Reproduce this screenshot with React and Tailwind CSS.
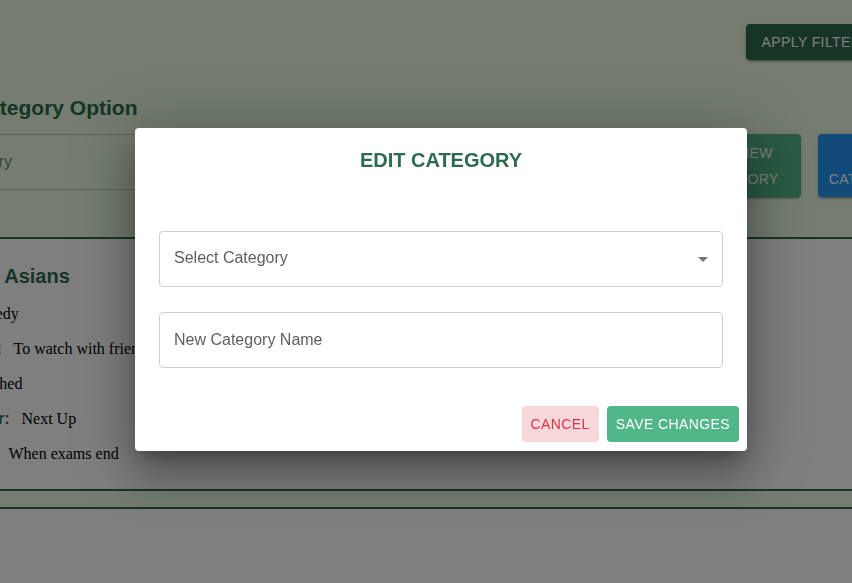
export default function App() {
  const sans = "font-['Liberation_Sans',Arial,sans-serif]";
  return (
    <div className={`relative h-[583px] w-full overflow-hidden bg-white ${sans}`}>
      {/* Top filter section */}
      <section className="h-[239px] border-b-2 border-[#2d6a4f] bg-[#e8fae0] pt-6">
        <div className="flex justify-end">
          <button className="-mr-[35px] h-9 whitespace-nowrap rounded bg-[#2d6a4f] px-4 text-sm uppercase tracking-[0.4px] text-white shadow-[0_3px_1px_-2px_rgba(0,0,0,0.2),0_2px_2px_0_rgba(0,0,0,0.14),0_1px_5px_0_rgba(0,0,0,0.12)]">
            Apply Filters
          </button>
        </div>
        <h2 className="-ml-[27px] mt-8 whitespace-nowrap text-[21px] font-bold leading-8 text-[#2d6a4f]">
          Category Option
        </h2>
        <div className="-ml-[68px] -mr-[68px] mt-[10px] flex items-start">
          <div className="flex h-14 flex-1 items-center rounded border border-black/20 px-[14px] text-base text-[#7a7a7a]">
            Category
          </div>
          <button className="ml-4 h-[63px] w-[125px] rounded bg-[#52b788] px-4 text-sm uppercase leading-[26px] tracking-[0.4px] text-white shadow-[0_3px_1px_-2px_rgba(0,0,0,0.2),0_2px_2px_0_rgba(0,0,0,0.14),0_1px_5px_0_rgba(0,0,0,0.12)]">
            Add New Category
          </button>
          <button className="ml-[17px] h-[63px] w-[102px] rounded bg-[#2196f3] px-[10px] text-sm uppercase leading-[26px] tracking-[0.4px] text-white shadow-[0_3px_1px_-2px_rgba(0,0,0,0.2),0_2px_2px_0_rgba(0,0,0,0.14),0_1px_5px_0_rgba(0,0,0,0.12)]">
            Edit Category
          </button>
        </div>
      </section>

      {/* Movie card */}
      <section className="h-[250px]">
        <div className="-ml-[104px] pt-[21px]">
          <h3 className="whitespace-nowrap text-[20px] font-bold leading-8 text-[#2d6a4f]">
            Crazy Rich Asians
          </h3>
          <div className="mt-1 whitespace-nowrap font-['Liberation_Serif','Times_New_Roman',serif] text-base text-black">
            <p className="leading-[35px]">
              <b className={`${sans} text-[#2d6a4f]`}>Genres:</b>
              {"\u00a0 "}Comedy
            </p>
            <p className="leading-[35px]">
              <b className={`${sans} text-[#2d6a4f]`}>My Reminder:</b>
              {"\u00a0\u00a0 "}To watch with friends
            </p>
            <p className="leading-[35px]">
              <b className={`${sans} text-[#2d6a4f]`}>Current:</b>
              {"\u00a0 "}Watched
            </p>
            <p className="leading-[35px]">
              <b className={`${sans} text-[#2d6a4f]`}>Viewing Order:</b>
              {"\u00a0\u00a0 "}Next Up
            </p>
            <p className="leading-[35px]">
              <b className={`${sans} text-[#2d6a4f]`}>Watch When:</b>
              {"\u00a0\u00a0 "}When exams end
            </p>
          </div>
        </div>
      </section>

      {/* Divider strip */}
      <div className="h-5 border-y-2 border-[#2d6a4f] bg-[#e8fae0]" />
      <section className="h-[100px] bg-white" />

      {/* Backdrop */}
      <div className="fixed inset-0 bg-black/50" />

      {/* Dialog */}
      <div className="absolute left-[135px] top-[128px] flex h-[323px] w-[612px] flex-col rounded bg-white shadow-[0_11px_15px_-7px_rgba(0,0,0,0.3),0_24px_38px_3px_rgba(0,0,0,0.2),0_9px_60px_12px_rgba(0,0,0,0.2)]">
        <h2 className="flex h-16 items-center justify-center text-[20px] font-bold text-[#2d6a4f]">
          EDIT CATEGORY
        </h2>
        <div className="px-6 pt-[39px]">
          <div className="flex h-14 items-center rounded border border-[#cfcfcf] pl-[14px] text-base text-[#5f5f5f]">
            <span className="pb-0.5">Select Category</span>
            <svg className="ml-auto mr-[7px] h-6 w-6 fill-[#757575]" viewBox="0 0 24 24">
              <path d="M7 10l5 5 5-5z" />
            </svg>
          </div>
          <div className="mt-[25px] flex h-14 items-center rounded border border-[#cfcfcf] pl-[14px] text-base text-[#5f5f5f]">
            <span>New Category Name</span>
          </div>
        </div>
        <div className="mt-auto flex justify-end gap-2 px-2 pb-[9px]">
          <button className="h-9 rounded bg-[#f8d7da] px-[9px] text-sm uppercase tracking-[0.4px] text-[#dc3545]">
            Cancel
          </button>
          <button className="h-9 rounded bg-[#52b788] px-[9px] text-sm uppercase tracking-[0.4px] text-white">
            Save Changes
          </button>
        </div>
      </div>
    </div>
  );
}
